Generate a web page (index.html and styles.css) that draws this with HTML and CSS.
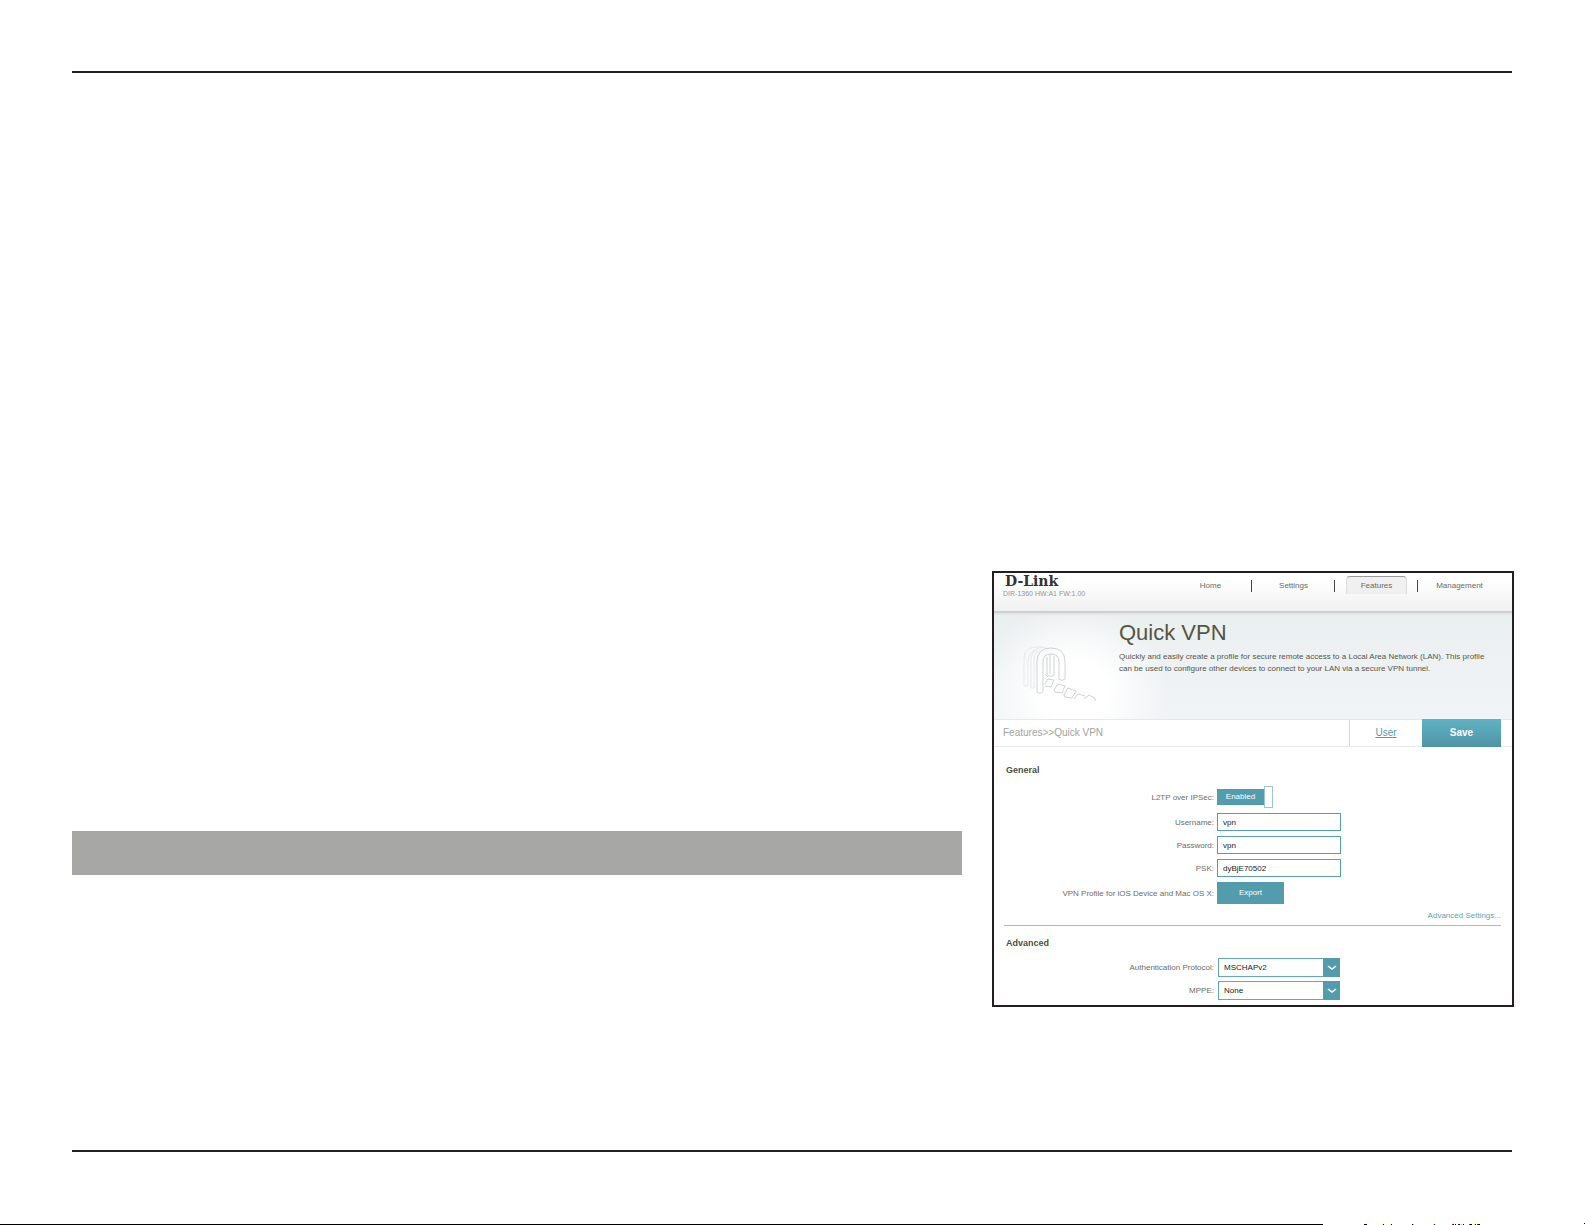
FILE: index.html
```html
<!DOCTYPE html>
<html lang="en">
<head>
<meta charset="utf-8">
<meta name="viewport" content="width=device-width, initial-scale=1">
<title>Quick VPN</title>
<link rel="stylesheet" href="styles.css">
</head>
<body>
<hr class="rule">
<main class="content">
  <div class="section-band"></div>
  <section class="screen">
    <header class="topbar">
      <div class="brand">
        <div class="logo">D-Link</div>
        <div class="model">DIR-1360 HW:A1 FW:1.00</div>
      </div>
      <nav class="tabs">
        <a class="tab" href="#home">Home</a>
        <a class="tab" href="#settings">Settings</a>
        <a class="tab tab-active" href="#features">Features</a>
        <a class="tab" href="#management">Management</a>
      </nav>
    </header>
    <div class="hero">
      <svg class="hero-icon" width="90" height="70" viewBox="0 0 90 70" fill="none" stroke-linejoin="round">
        <g stroke="#e6e9ea">
          <path d="M9 45V18Q9 7 20 6Q26 5 31 7M13 45V19Q14 10 22 9M9 45H13"/>
          <path d="M16 47V18Q17 8 27 6M19 47V20Q19 12 25 9M16 47H19"/>
        </g>
        <g stroke="#d0d2d3">
          <path d="M22 21Q22 7 36 7Q50 7 50 21V38Q47 41 44 38V21Q44 13 36 13Q28 13 28 21V50Q25 54 22 51Z"/>
          <path d="M32 16V33Q35 37 39 34V15M35 14V33"/>
          <path d="M30 33L33 36M30 43L33 38L39 39L36 46L30 45M39 49L43 43L50 45L47 52L40 51ZM49 54L53 47L61 50L57 57L50 56ZM59 58L63 53L70 55M69 58L74 54L80 57V60"/>
        </g>
      </svg>
      <div class="hero-text">
        <h1 class="hero-title">Quick VPN</h1>
        <p class="hero-desc">Quickly and easily create a profile for secure remote access to a Local Area Network (LAN). This profile can be used to configure other devices to connect to your LAN via a secure VPN tunnel.</p>
      </div>
    </div>
    <div class="toolbar">
      <div class="crumbs">Features&gt;&gt;Quick VPN</div>
      <a class="user-link" href="#user">User</a>
      <button class="save" type="button">Save</button>
    </div>
    <form class="form">
      <h2 class="group-title">General</h2>
      <div class="rows">
        <label class="label" for="l2tp">L2TP over IPSec:</label>
        <span class="switch">
          <input class="switch-input" type="checkbox" id="l2tp" checked>
          <span class="switch-text">Enabled</span>
          <span class="switch-knob"></span>
        </span>
        <label class="label" for="username">Username:</label>
        <input class="field" id="username" type="text" value="vpn">
        <label class="label" for="password">Password:</label>
        <input class="field" id="password" type="text" value="vpn">
        <label class="label" for="psk">PSK:</label>
        <input class="field" id="psk" type="text" value="dyBjE70502">
        <label class="label" for="export">VPN Profile for iOS Device and Mac OS X:</label>
        <button class="export" id="export" type="button">Export</button>
      </div>
      <div class="more"><a class="more-link" href="#advanced">Advanced Settings...</a></div>
      <h2 class="group-title" id="advanced">Advanced</h2>
      <div class="rows rows-select">
        <label class="label" for="auth">Authentication Protocol:</label>
        <span class="select">
          <select class="select-input" id="auth"><option>MSCHAPv2</option></select>
          <svg class="arrow" width="17" height="19" viewBox="0 0 17 19"><path d="M5 8l4 3 4-3" fill="none" stroke="#fff" stroke-width="1.5"/></svg>
        </span>
        <label class="label" for="mppe">MPPE:</label>
        <span class="select">
          <select class="select-input" id="mppe"><option>None</option></select>
          <svg class="arrow" width="17" height="19" viewBox="0 0 17 19"><path d="M5 8l4 3 4-3" fill="none" stroke="#fff" stroke-width="1.5"/></svg>
        </span>
      </div>
    </form>
  </section>
</main>
<hr class="rule">
<footer class="edge">
  <div class="edge-line"></div>
  <svg width="262" height="2" viewBox="0 0 262 2" shape-rendering="crispEdges">
    <path d="M41 1h2v1h-2zM60 1h1v1h-1zM68 1h1v1h-1zM89 1h1v1h-1zM130 1h1v1h-1zM132 1h1v1h-1zM136 1h1v1h-1zM140 1h1v1h-1zM147 1h2v1h-2zM152 1h1v1h-1zM155 1h2v1h-2zM261 0h1v1h-1z" fill="#000"/>
    <path d="M59 1h1v1h-1zM67 1h1v1h-1zM110 1h1v1h-1zM151 1h1v1h-1z" fill="#ff0"/>
    <path d="M43 1h1v1h-1zM111 1h1v1h-1zM135 1h1v1h-1z" fill="#00f"/>
    <path d="M90 1h1v1h-1zM138 1h1v1h-1z" fill="#0ff"/>
    <path d="M129 1h1v1h-1zM146 1h1v1h-1zM154 1h1v1h-1z" fill="#f00"/>
  </svg>
</footer>
</body>
</html>
```
FILE: styles.css
```css
* { box-sizing: border-box; }

body {
  margin: 0;
  min-height: 100vh;
  display: flex;
  flex-direction: column;
  background: #fff;
  color: #56564a;
  font: 8px/11px "Liberation Sans", Arial, sans-serif;
}

.rule {
  flex: none;
  height: 2px;
  margin: 0 73px 0 72px;
  border: 0;
  background: #231f20;
}
.rule:first-child { margin-top: 71px; }

.content {
  flex: 1;
  display: grid;
  grid-template-columns: 1fr 522px;
  gap: 30px;
  align-items: end;
  padding: 40px 71px 143px 72px;
}

.section-band {
  height: 44px;
  margin-bottom: 132px;
  background: #a7a7a5;
}

.screen { border: 2px solid #231f20; }

/* Top bar */
.topbar {
  display: flex;
  justify-content: space-between;
  height: 40px;
  padding: 1px 11px 0 9px;
  border-bottom: 2px solid #cdcecf;
  background: linear-gradient(#fff 20%, #f0f0f0);
}
.logo {
  padding-left: 2px;
  color: #333;
  font: bold 14px/15px "DejaVu Serif", serif;
}
.model {
  color: #97978f;
  font-size: 7px;
  line-height: 10px;
}
.tabs { display: flex; align-items: flex-start; }
.tab {
  width: 83px;
  height: 20px;
  padding: 2px 10px 0;
  color: #6b6b63;
  line-height: 20px;
  text-align: center;
  text-decoration: none;
  background: linear-gradient(#444, #444) right 6px / 1px 12px no-repeat;
}
.tab:last-child { background: none; }
.tab-active {
  position: relative;
  z-index: 0;
}
.tab-active::before {
  content: "";
  position: absolute;
  z-index: -1;
  inset: 2px 11px 0;
  border: 1px solid #ddd;
  border-top-color: #999;
  border-bottom: 0;
  border-radius: 4px 4px 0 0;
  background: #f0f0f0;
}

/* Page heading */
.hero {
  display: flex;
  height: 106px;
  padding: 0 16px 0 21px;
  border-top: 2px solid #e2e6e7;
  background:
    radial-gradient(ellipse 95px 85px at 80px 75px, #fff 35%, transparent),
    linear-gradient(#eaeff0, #f1f4f6);
}
.hero-icon { flex: none; margin-top: 26px; }
.hero-text { flex: 1; padding: 6px 0 0 14px; }
.hero-title {
  margin: 0 0 6px;
  color: #56563f;
  font-size: 22px;
  font-weight: 400;
  line-height: 24px;
}
.hero-desc { margin: 0; line-height: 12px; }

/* Breadcrumb row */
.toolbar {
  display: flex;
  height: 28px;
  padding: 0 11px 0 9px;
  border: 1px solid #e6e8e9;
  border-width: 1px 0;
  font-size: 10px;
  line-height: 26px;
}
.crumbs { flex: 1; color: #a3a3a0; }
.user-link {
  width: 73px;
  border-left: 1px solid #d8d8d8;
  color: #559aaa;
  text-align: center;
}
.save {
  width: 79px;
  margin: -1px 0;
  padding: 0;
  border: 0;
  background: linear-gradient(#5fb3c4, #4f94a5);
  color: #fff;
  font: bold 10px/26px "Liberation Sans", Arial, sans-serif;
}

/* Form */
.form { padding: 18px 11px 5px 10px; }
.group-title {
  margin: 0 2px;
  color: #4f4f3c;
  font-size: 9px;
  line-height: 11px;
}
.rows {
  display: grid;
  grid-template-columns: 210px auto;
  justify-content: start;
  justify-items: start;
  align-items: center;
  gap: 5px 3px;
  padding-top: 10px;
}
.label { justify-self: end; color: #6d6d63; }
.field {
  width: 124px;
  height: 18px;
  padding: 0 5px;
  border: 1px solid #559fb0;
  background: #fff;
  color: #222;
  font: 8px/16px "Liberation Sans", Arial, sans-serif;
}
.switch {
  position: relative;
  display: flex;
  align-items: center;
}
.switch-input {
  position: absolute;
  inset: 0;
  width: 100%;
  height: 100%;
  margin: 0;
  opacity: 0;
}
.switch-text {
  width: 47px;
  height: 16px;
  background: #529cad;
  color: #fff;
  line-height: 16px;
  text-align: center;
}
.switch-knob {
  width: 9px;
  height: 22px;
  border: 1px solid #9cc8d2;
  background: #fff;
}
.export {
  width: 67px;
  height: 22px;
  padding: 0;
  border: 0;
  background: #529cad;
  color: #fff;
  font: 8px/22px "Liberation Sans", Arial, sans-serif;
}
.more {
  margin-bottom: 12px;
  padding: 6px 0 4px;
  border-bottom: 1px solid #b3b9bb;
  text-align: right;
}
.more-link { color: #62a3b3; text-decoration: none; }

.rows-select {
  gap: 4px;
  padding-top: 9px;
}
.select { display: grid; }
.select > * { grid-area: 1 / 1; }
.select-input {
  width: 122px;
  height: 19px;
  padding: 0 20px 0 5px;
  border: 1px solid #62a8b8;
  border-radius: 0;
  appearance: none;
  background: #fff;
  color: #222;
  font: 8px/17px "Liberation Sans", Arial, sans-serif;
}
.arrow {
  justify-self: end;
  background: #529cad;
  pointer-events: none;
}

/* Page edge */
.edge {
  display: flex;
  align-items: flex-end;
  height: 73px;
  overflow: hidden;
}
.edge-line {
  flex: 1;
  height: 1px;
  background: #000;
}
```
